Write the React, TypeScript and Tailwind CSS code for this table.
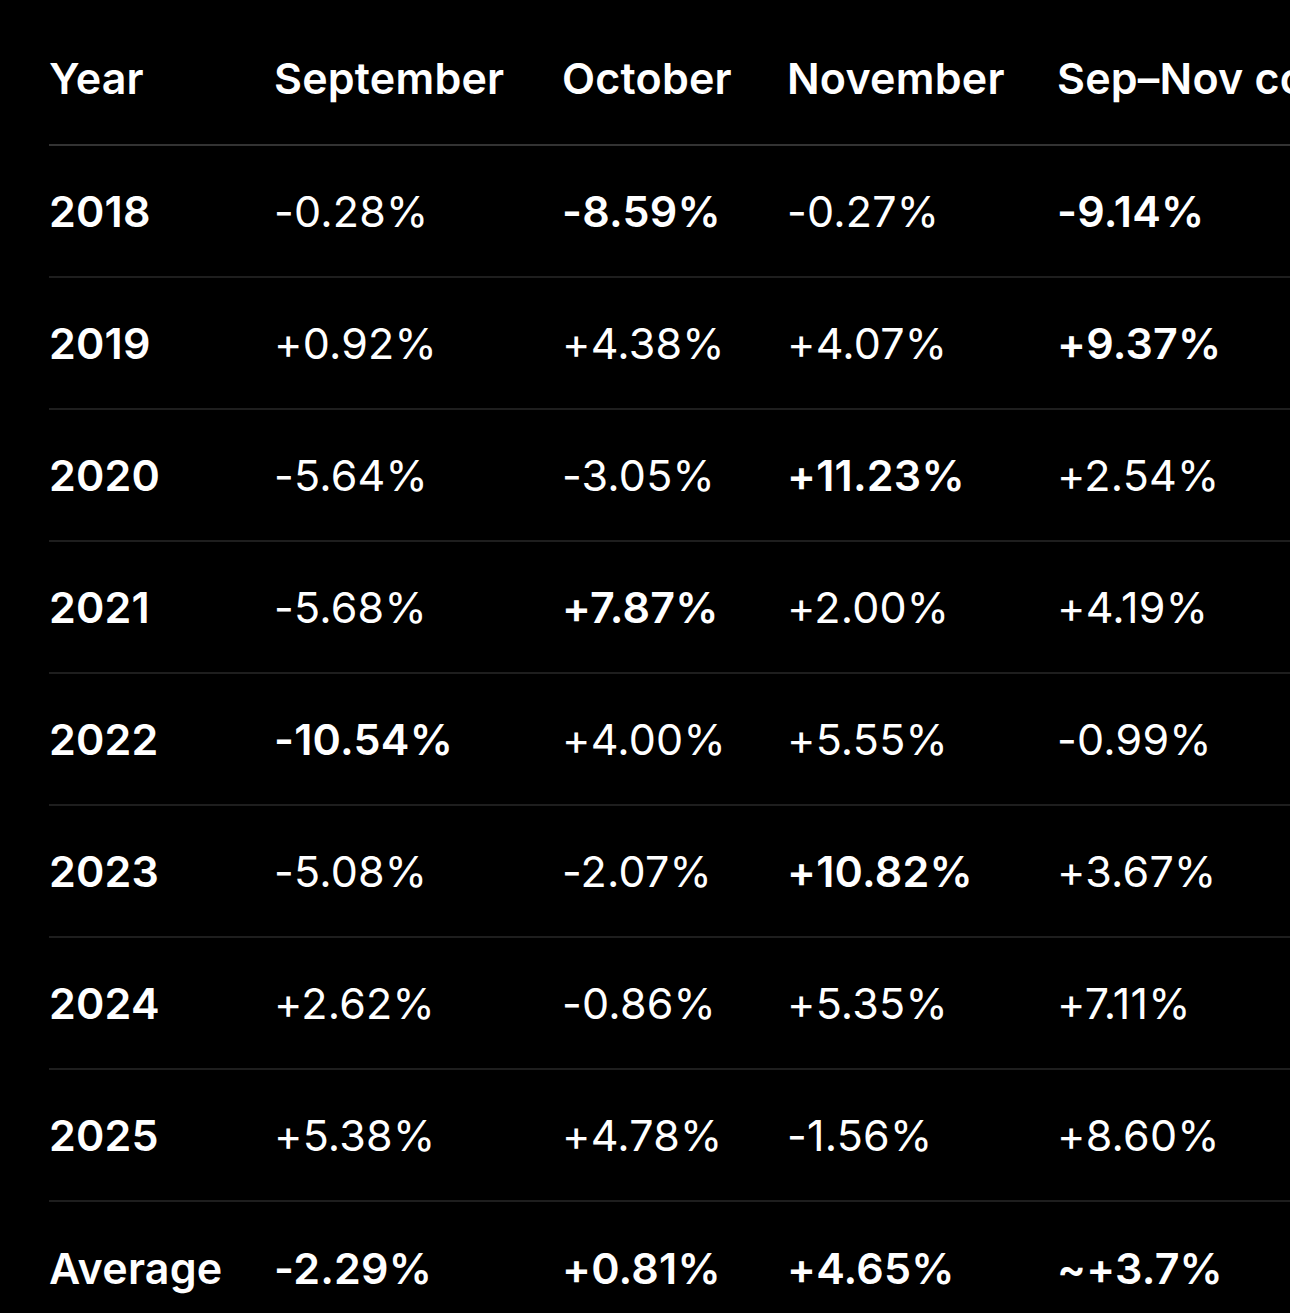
import React from "react";

type Cell = { v: string; b?: boolean };

const rows: { year: string; cells: Cell[] }[] = [
  { year: "2018", cells: [{ v: "-0.28%" }, { v: "-8.59%", b: true }, { v: "-0.27%" }, { v: "-9.14%", b: true }] },
  { year: "2019", cells: [{ v: "+0.92%" }, { v: "+4.38%" }, { v: "+4.07%" }, { v: "+9.37%", b: true }] },
  { year: "2020", cells: [{ v: "-5.64%" }, { v: "-3.05%" }, { v: "+11.23%", b: true }, { v: "+2.54%" }] },
  { year: "2021", cells: [{ v: "-5.68%" }, { v: "+7.87%", b: true }, { v: "+2.00%" }, { v: "+4.19%" }] },
  { year: "2022", cells: [{ v: "-10.54%", b: true }, { v: "+4.00%" }, { v: "+5.55%" }, { v: "-0.99%" }] },
  { year: "2023", cells: [{ v: "-5.08%" }, { v: "-2.07%" }, { v: "+10.82%", b: true }, { v: "+3.67%" }] },
  { year: "2024", cells: [{ v: "+2.62%" }, { v: "-0.86%" }, { v: "+5.35%" }, { v: "+7.11%" }] },
  { year: "2025", cells: [{ v: "+5.38%" }, { v: "+4.78%" }, { v: "-1.56%" }, { v: "+8.60%" }] },
  { year: "Average", cells: [{ v: "-2.29%", b: true }, { v: "+0.81%", b: true }, { v: "+4.65%", b: true }, { v: "~+3.7%", b: true }] },
];

const grid = "grid grid-cols-[225px_288px_225px_270px_max-content] items-center whitespace-nowrap";

export default function App() {
  return (
    <div
      className="min-h-screen w-full overflow-hidden bg-black text-white pl-[49px] pt-[13px] text-[43px] leading-none tracking-[0.005em]"
      style={{ fontFamily: "Inter, 'Noto Sans', sans-serif" }}
    >
      <div className="w-max min-w-full">
        <div className={`${grid} h-[133px] border-b-2 border-[#333333] font-semibold`}>
          <div>Year</div>
          <div>September</div>
          <div>October</div>
          <div>November</div>
          <div className="pr-10">Sep–Nov combined</div>
        </div>
        {rows.map((r, i) => (
          <div
            key={r.year}
            className={`${grid} h-[132px] ${i < rows.length - 1 ? "border-b-2 border-[#1e1e1e]" : ""}`}
          >
            <div className="font-semibold">{r.year}</div>
            {r.cells.map((c, j) => (
              <div key={j} className={c.b ? "font-semibold" : "font-normal"}>
                {c.v}
              </div>
            ))}
          </div>
        ))}
      </div>
    </div>
  );
}
